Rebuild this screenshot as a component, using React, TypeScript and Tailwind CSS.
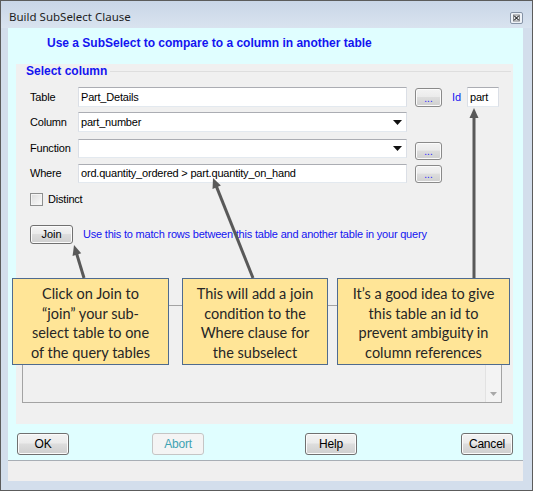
import React from "react";

const btnBg =
  "bg-[linear-gradient(to_bottom,#f3f3f3_0%,#ebebeb_45%,#dddddd_50%,#cfcfcf_100%)]";

function WinButton({
  label,
  w,
  disabled,
}: {
  label: string;
  w: string;
  disabled?: boolean;
}) {
  if (disabled) {
    return (
      <div
        className={`${w} h-[22px] rounded-[3px] border border-[#c5c5c5] bg-[#f4f4f4] flex items-center justify-center text-[12px] tracking-[-0.2px] text-[#3fa3b3]`}
      >
        {label}
      </div>
    );
  }
  return (
    <div
      className={`${w} h-[22px] rounded-[3px] border border-[#707070] ${btnBg} shadow-[inset_0_0_0_1px_#fbfbfb] flex items-center justify-center text-[12px] tracking-[-0.2px] text-black`}
    >
      {label}
    </div>
  );
}

function DotButton({ h = "h-[19px]" }: { h?: string }) {
  return (
    <div
      className={`w-[27px] ${h} rounded-[3px] border border-[#8a8a8a] ${btnBg} shadow-[inset_0_0_0_1px_#fbfbfb] flex items-end justify-center pb-[2px] text-[10px] leading-[10px] text-[#2020ff]`}
    >
      ...
    </div>
  );
}

function TextBox({
  value,
  w,
  h = "h-[20px]",
  dropdown,
}: {
  value: string;
  w: string;
  h?: string;
  dropdown?: boolean;
}) {
  return (
    <div
      className={`${w} ${h} bg-white border border-t-[#abadb3] border-l-[#dbdfe6] border-r-[#dbdfe6] border-b-[#e3e9ef] flex items-center pl-[2px] text-[11px] tracking-[-0.2px] text-black relative`}
    >
      <span className="flex-1 whitespace-nowrap">{value}</span>
      {dropdown && (
        <svg width="9" height="5" viewBox="0 0 9 5" className="mr-[4px]">
          <polygon points="0,0 9,0 4.5,5" fill="#111" />
        </svg>
      )}
    </div>
  );
}

function arrowParts(x1: number, y1: number, x2: number, y2: number) {
  const dx = x2 - x1;
  const dy = y2 - y1;
  const L = Math.hypot(dx, dy);
  const ux = dx / L;
  const uy = dy / L;
  const len = 10;
  const w = 4.5;
  const bx = x2 - ux * len;
  const by = y2 - uy * len;
  return {
    ex: bx + ux * 2,
    ey: by + uy * 2,
    pts: `${x2},${y2} ${bx - uy * w},${by + ux * w} ${bx + uy * w},${by - ux * w}`,
  };
}

const arrows: [number, number, number, number][] = [
  [83, 277, 73, 244],
  [252, 277, 212, 177],
  [473, 277, 473, 107],
];

const callouts = [
  {
    left: "left-[11px]",
    w: "w-[157px]",
    lines: ["Click on Join to", "\u201Cjoin\u201D your sub-", "select table to one", "of the query tables"],
  },
  {
    left: "left-[181px]",
    w: "w-[146px]",
    lines: ["This will add a join", "condition to the", "Where clause for", "the subselect"],
  },
  {
    left: "left-[336px]",
    w: "w-[173px]",
    lines: ["It\u2019s a good idea to give", "this table an id to", "prevent ambiguity in", "column references"],
  },
];

export default function App() {
  return (
    <div className="w-[533px] h-[491px] relative overflow-hidden border border-[#5c5c5c] bg-[#d3deec] flex flex-col font-['Liberation_Sans',Arial,sans-serif]">
      {/* Title bar */}
      <div className="h-[27px] shrink-0 flex items-center pl-[8px] pr-[9px] bg-[linear-gradient(to_bottom,#c9d6e7,#d9e3ef)]">
        <span className="text-[11.5px] text-[#1e1e1e] font-['Noto_Sans',sans-serif] mt-[4px]">
          Build SubSelect Clause
        </span>
        <div className="ml-auto mt-[6px]">
          <svg width="13" height="12" viewBox="0 0 13 12">
            <rect x="0.5" y="0.5" width="12" height="11" rx="1.5" fill="#eef2f7" stroke="#8593a6" />
            <rect x="3.5" y="3" width="6" height="6" fill="none" stroke="#6a6a6a" strokeWidth="0.8" />
            <path d="M4.3 3.8 L8.7 8.2 M8.7 3.8 L4.3 8.2" stroke="#333" strokeWidth="1.1" />
          </svg>
        </div>
      </div>

      {/* Frame + client */}
      <div className="flex-1 flex pl-[7px] pr-[9px] pb-[9px]">
        <div className="flex-1 bg-[#e0feff] flex flex-col">
          {/* heading */}
          <div className="h-[36px] shrink-0 pt-[8px] pl-[39px]">
            <div className="text-[12px] leading-[14px] font-bold text-[#1414f0]">
              Use a SubSelect to compare to a column in another table
            </div>
          </div>

          {/* group panel */}
          <div className="ml-[8px] w-[497px] h-[360px] shrink-0 bg-[#f0f0f0] flex flex-col">
            <div className="h-[13px] flex items-center">
              <span className="ml-[10px] text-[12px] leading-[12px] font-bold text-[#1414f0] bg-[#f0f0f0] pr-[3px]">
                Select column
              </span>
              <div className="flex-1 mt-[1px] border-t border-[#dedede] mr-[2px]" />
            </div>

            {/* Table row */}
            <div className="mt-[10px] ml-[14px] h-[20px] flex items-center">
              <span className="w-[48px] text-[11px] tracking-[-0.2px] text-black">Table</span>
              <TextBox value="Part_Details" w="w-[329px]" />
              <div className="ml-[8px]">
                <DotButton />
              </div>
              <span className="ml-[10px] w-[15px] text-[11px] text-[#1414f0]">Id</span>
              <TextBox value="part" w="w-[32px]" />
            </div>

            {/* Column row */}
            <div className="mt-[5px] ml-[14px] h-[20px] flex items-center">
              <span className="w-[48px] text-[11px] tracking-[-0.2px] text-black">Column</span>
              <TextBox value="part_number" w="w-[329px]" dropdown />
            </div>

            {/* Function row */}
            <div className="mt-[7px] ml-[14px] h-[19px] flex items-center">
              <span className="w-[48px] text-[11px] tracking-[-0.2px] text-black">Function</span>
              <TextBox value="" w="w-[329px]" h="h-[19px]" dropdown />
              <div className="ml-[8px] mt-[4px]">
                <DotButton h="h-[18px]" />
              </div>
            </div>

            {/* Where row */}
            <div className="mt-[6px] ml-[14px] h-[19px] flex items-center">
              <span className="w-[48px] text-[11px] tracking-[-0.2px] text-black">Where</span>
              <TextBox
                value="ord.quantity_ordered > part.quantity_on_hand"
                w="w-[329px]"
                h="h-[19px]"
              />
              <div className="ml-[8px]">
                <DotButton h="h-[18px]" />
              </div>
            </div>

            {/* Distinct */}
            <div className="mt-[10px] ml-[14px] h-[13px] flex items-center">
              <div className="w-[13px] h-[13px] border border-[#8e8f8f] bg-[linear-gradient(135deg,#dcdcdc,#fbfbfb)] shadow-[inset_0_0_0_1px_#f4f4f4]" />
              <span className="ml-[5px] text-[11px] tracking-[-0.2px] text-black">Distinct</span>
            </div>

            {/* Join */}
            <div className="mt-[19px] ml-[14px] h-[19px] flex items-center">
              <div
                className={`w-[43px] h-[19px] rounded-[3px] border border-[#707070] ${btnBg} shadow-[inset_0_0_0_1px_#fbfbfb] flex items-center justify-center text-[11px] text-black`}
              >
                Join
              </div>
              <span className="ml-[10px] text-[11px] tracking-[-0.2px] text-[#1414f0]">
                Use this to match rows between this table and another table in your query
              </span>
            </div>

            {/* memo */}
            <div className="mt-[61px] ml-[6px] w-[480px] h-[98px] border border-[#a3a3a3] bg-[#f0f0f0] flex justify-end">
              <div className="w-[16px] h-full border-l border-[#e2e2e2] bg-[#f3f3f3] flex flex-col justify-end items-center pb-[6px]">
                <svg width="7" height="4" viewBox="0 0 7 4">
                  <polygon points="0,0 7,0 3.5,4" fill="#a8a8a8" />
                </svg>
              </div>
            </div>
          </div>

          {/* buttons */}
          <div className="mt-[9px] h-[22px] shrink-0 relative flex">
            <div className="ml-[9px]">
              <WinButton label="OK" w="w-[52px]" />
            </div>
            <div className="ml-[83px]">
              <WinButton label="Abort" w="w-[52px]" disabled />
            </div>
            <div className="ml-[101px]">
              <WinButton label="Help" w="w-[52px]" />
            </div>
            <div className="ml-[104px]">
              <WinButton label="Cancel" w="w-[52px]" />
            </div>
          </div>

          {/* status bar */}
          <div className="mt-[5px] border-t border-[#a8aeb5] flex-1 bg-[#f0efef]" />
        </div>
      </div>

      {/* callouts */}
      {callouts.map((c, i) => (
        <div
          key={i}
          className={`absolute top-[277px] ${c.left} ${c.w} h-[87px] bg-[#ffe597] border border-[#4f6b8f] pt-[5px] text-center text-[14.5px] leading-[19.5px] text-[#262626] font-['Lato',sans-serif]`}
        >
          {c.lines.map((l, j) => (
            <div key={j} className="whitespace-nowrap">{l}</div>
          ))}
        </div>
      ))}

      {/* arrows */}
      <svg className="absolute left-0 top-0 pointer-events-none" width="533" height="491">
        {arrows.map(([x1, y1, x2, y2], i) => {
          const a = arrowParts(x1, y1, x2, y2);
          return (
            <g key={i}>
              <line x1={x1} y1={y1} x2={a.ex} y2={a.ey} stroke="#595959" strokeWidth="3" />
              <polygon points={a.pts} fill="#595959" />
            </g>
          );
        })}
      </svg>
    </div>
  );
}
